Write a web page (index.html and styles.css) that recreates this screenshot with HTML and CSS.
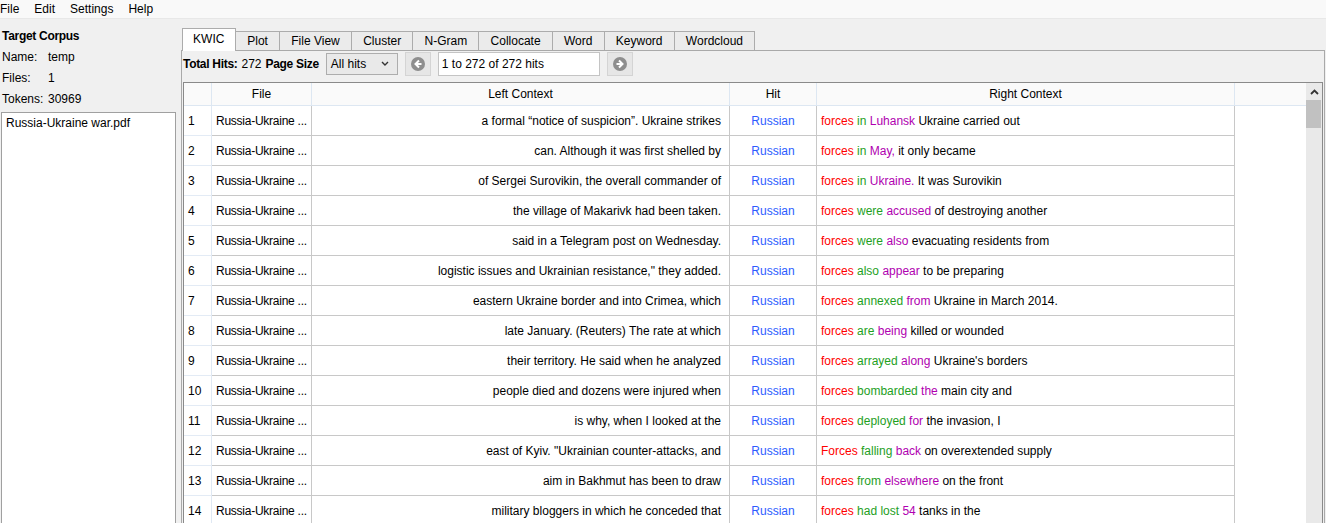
FILE: index.html
```html
<!DOCTYPE html>
<html>
<head>
<meta charset="utf-8">
<link rel="stylesheet" href="styles.css">
</head>
<body>
<div class="menubar">
  <span>File</span><span>Edit</span><span>Settings</span><span>Help</span>
</div>
<div class="main">
  <aside class="left">
    <div class="info title">Target Corpus</div>
    <div class="info"><span class="lbl">Name:</span><span>temp</span></div>
    <div class="info"><span class="lbl">Files:</span><span>1</span></div>
    <div class="info"><span class="lbl">Tokens:</span><span>30969</span></div>
    <div class="filelist"><div class="fileitem">Russia-Ukraine war.pdf</div></div>
  </aside>
  <section class="right">
    <div class="tabs">
      <div class="tab active">KWIC</div>
      <div class="tab">Plot</div>
      <div class="tab">File View</div>
      <div class="tab">Cluster</div>
      <div class="tab">N-Gram</div>
      <div class="tab">Collocate</div>
      <div class="tab">Word</div>
      <div class="tab">Keyword</div>
      <div class="tab">Wordcloud</div>
    </div>
    <div class="panel">
      <div class="toolbar">
        <b>Total Hits:</b><span class="hits">272</span><b class="ps">Page Size</b>
        <div class="select"><span>All hits</span><svg width="8" height="6" viewBox="0 0 8 6"><polyline points="1,1 4,4 7,1" fill="none" stroke="#333" stroke-width="1.4"/></svg></div>
        <div class="navbtn"><svg width="14" height="14" viewBox="0 0 14 14"><circle cx="7" cy="7" r="7" fill="#8e8e8e"/><polyline points="8,3.5 4.5,7 8,10.5" fill="none" stroke="#fff" stroke-width="2"/><line x1="5" y1="7" x2="10.5" y2="7" stroke="#fff" stroke-width="2"/></svg></div>
        <div class="field">1 to 272 of 272 hits</div>
        <div class="navbtn next"><svg width="14" height="14" viewBox="0 0 14 14"><circle cx="7" cy="7" r="7" fill="#8e8e8e"/><polyline points="6,3.5 9.5,7 6,10.5" fill="none" stroke="#fff" stroke-width="2"/><line x1="3.5" y1="7" x2="9" y2="7" stroke="#fff" stroke-width="2"/></svg></div>
      </div>
      <div class="tablewrap">
        <div class="table">
          <div class="row head">
            <div class="c num"></div><div class="c">File</div><div class="c">Left Context</div><div class="c">Hit</div><div class="c">Right Context</div><div class="c fill"></div>
          </div>
          <div class="row"><div class="c num">1</div><div class="c file">Russia-Ukraine ...</div><div class="c lc">a formal “notice of suspicion”. Ukraine strikes</div><div class="c hit">Russian</div><div class="c rc"><span><i class="r">forces</i> <i class="g">in</i> <i class="p">Luhansk</i> Ukraine carried out</span></div><div class="c fill"></div></div>
          <div class="row"><div class="c num">2</div><div class="c file">Russia-Ukraine ...</div><div class="c lc">can. Although it was first shelled by</div><div class="c hit">Russian</div><div class="c rc"><span><i class="r">forces</i> <i class="g">in</i> <i class="p">May,</i> it only became</span></div><div class="c fill"></div></div>
          <div class="row"><div class="c num">3</div><div class="c file">Russia-Ukraine ...</div><div class="c lc">of Sergei Surovikin, the overall commander of</div><div class="c hit">Russian</div><div class="c rc"><span><i class="r">forces</i> <i class="g">in</i> <i class="p">Ukraine.</i> It was Surovikin</span></div><div class="c fill"></div></div>
          <div class="row"><div class="c num">4</div><div class="c file">Russia-Ukraine ...</div><div class="c lc">the village of Makarivk had been taken.</div><div class="c hit">Russian</div><div class="c rc"><span><i class="r">forces</i> <i class="g">were</i> <i class="p">accused</i> of destroying another</span></div><div class="c fill"></div></div>
          <div class="row"><div class="c num">5</div><div class="c file">Russia-Ukraine ...</div><div class="c lc">said in a Telegram post on Wednesday.</div><div class="c hit">Russian</div><div class="c rc"><span><i class="r">forces</i> <i class="g">were</i> <i class="p">also</i> evacuating residents from</span></div><div class="c fill"></div></div>
          <div class="row"><div class="c num">6</div><div class="c file">Russia-Ukraine ...</div><div class="c lc">logistic issues and Ukrainian resistance," they added.</div><div class="c hit">Russian</div><div class="c rc"><span><i class="r">forces</i> <i class="g">also</i> <i class="p">appear</i> to be preparing</span></div><div class="c fill"></div></div>
          <div class="row"><div class="c num">7</div><div class="c file">Russia-Ukraine ...</div><div class="c lc">eastern Ukraine border and into Crimea, which</div><div class="c hit">Russian</div><div class="c rc"><span><i class="r">forces</i> <i class="g">annexed</i> <i class="p">from</i> Ukraine in March 2014.</span></div><div class="c fill"></div></div>
          <div class="row"><div class="c num">8</div><div class="c file">Russia-Ukraine ...</div><div class="c lc">late January. (Reuters) The rate at which</div><div class="c hit">Russian</div><div class="c rc"><span><i class="r">forces</i> <i class="g">are</i> <i class="p">being</i> killed or wounded</span></div><div class="c fill"></div></div>
          <div class="row"><div class="c num">9</div><div class="c file">Russia-Ukraine ...</div><div class="c lc">their territory. He said when he analyzed</div><div class="c hit">Russian</div><div class="c rc"><span><i class="r">forces</i> <i class="g">arrayed</i> <i class="p">along</i> Ukraine's borders</span></div><div class="c fill"></div></div>
          <div class="row"><div class="c num">10</div><div class="c file">Russia-Ukraine ...</div><div class="c lc">people died and dozens were injured when</div><div class="c hit">Russian</div><div class="c rc"><span><i class="r">forces</i> <i class="g">bombarded</i> <i class="p">the</i> main city and</span></div><div class="c fill"></div></div>
          <div class="row"><div class="c num">11</div><div class="c file">Russia-Ukraine ...</div><div class="c lc">is why, when I looked at the</div><div class="c hit">Russian</div><div class="c rc"><span><i class="r">forces</i> <i class="g">deployed</i> <i class="p">for</i> the invasion, I</span></div><div class="c fill"></div></div>
          <div class="row"><div class="c num">12</div><div class="c file">Russia-Ukraine ...</div><div class="c lc">east of Kyiv. "Ukrainian counter-attacks, and</div><div class="c hit">Russian</div><div class="c rc"><span><i class="r">Forces</i> <i class="g">falling</i> <i class="p">back</i> on overextended supply</span></div><div class="c fill"></div></div>
          <div class="row"><div class="c num">13</div><div class="c file">Russia-Ukraine ...</div><div class="c lc">aim in Bakhmut has been to draw</div><div class="c hit">Russian</div><div class="c rc"><span><i class="r">forces</i> <i class="g">from</i> <i class="p">elsewhere</i> on the front</span></div><div class="c fill"></div></div>
          <div class="row"><div class="c num">14</div><div class="c file">Russia-Ukraine ...</div><div class="c lc">military bloggers in which he conceded that</div><div class="c hit">Russian</div><div class="c rc"><span><i class="r">forces</i> <i class="g">had lost</i> <i class="p">54</i> tanks in the</span></div><div class="c fill"></div></div>
        </div>
        <div class="scrollbar">
          <div class="arrow"><svg width="9" height="6" viewBox="0 0 9 6"><polyline points="1,5 4.5,1.5 8,5" fill="none" stroke="#333" stroke-width="1.8"/></svg></div>
          <div class="thumb"></div>
        </div>
      </div>
    </div>
  </section>
</div>
</body>
</html>
```
FILE: styles.css
```css
* { box-sizing: border-box; }
html, body { margin: 0; padding: 0; }
body {
  width: 1326px;
  height: 523px;
  overflow: hidden;
  background: #f0f0f0;
  font-family: "Liberation Sans", Arial, sans-serif;
  font-size: 12px;
  color: #000;
}
.menubar {
  height: 19px;
  display: flex;
  align-items: center;
  gap: 15px;
  padding-left: 0;
  background: #f9f9f9;
  border-bottom: 1px solid #e8e8e8;
  font-size: 12px;
}
.main {
  display: flex;
  height: 504px;
}
.left {
  width: 181px;
  flex: none;
  padding-top: 7px;
  display: flex;
  flex-direction: column;
}
.info {
  height: 21px;
  line-height: 21px;
  padding-left: 2px;
  display: flex;
}
.info.title { font-weight: bold; letter-spacing: -0.3px; }
.lbl { width: 46px; }
.filelist {
  margin: 2px 0 0 1px;
  width: 175px;
  flex: 1;
  background: #fff;
  border: 1px solid #a0a0a0;
  border-bottom: none;
}
.fileitem {
  padding: 3px 4px;
  line-height: 14px;
}
.right {
  flex: 1;
  margin-right: 1px;
  display: flex;
  flex-direction: column;
}
.tabs {
  margin-top: 9px;
  height: 22px;
  display: flex;
  align-items: flex-end;
  padding-left: 0.5px;
  position: relative;
  z-index: 1;
}
.tab {
  height: 19px;
  line-height: 18px;
  padding: 0 11.2px;
  border: 1px solid #acacac;
  border-bottom: none;
  background: #ebebeb;
  margin-left: -1px;
}
.tab:first-child { margin-left: 0; }
.tab.active {
  height: 23px;
  line-height: 20px;
  background: #fff;
  margin-bottom: -1px;
  padding: 0 10.6px;
}
.panel {
  flex: 1;
  border: 1px solid #a9a9a9;
  border-bottom: none;
  background: #f0f0f0;
  display: flex;
  flex-direction: column;
  min-height: 0;
}
.toolbar {
  margin-top: 1px;
  height: 24px;
  display: flex;
  align-items: center;
  padding-left: 1px;
}
.toolbar b { letter-spacing: -0.3px; }
.hits { margin: 0 4px 0 4px; }
.select {
  margin-left: 7px;
  width: 72px;
  height: 22px;
  border: 1px solid #adadad;
  background: #e9e9e9;
  display: flex;
  align-items: center;
  justify-content: space-between;
  padding: 0 8px 0 4px;
}
.navbtn {
  margin-left: 7px;
  width: 26px;
  height: 24px;
  border: 1px solid #d4d4d4;
  background: #e6e6e6;
  display: flex;
  align-items: center;
  justify-content: center;
}
.navbtn.next { margin-left: 7px; }
.field {
  margin-left: 7px;
  width: 162px;
  height: 24px;
  line-height: 22px;
  background: #fff;
  border: 1px solid #c4c4c4;
  padding-left: 3px;
}
.tablewrap {
  margin: 6px 1px 0 1px;
  flex: 1;
  border: 1px solid #8a8a8a;
  border-bottom: none;
  display: flex;
  min-height: 0;
  overflow: hidden;
  background: #fff;
}
.table { flex: 1; }
.row {
  display: grid;
  grid-template-columns: 28px 100px 418px 87px 418px 1fr;
  height: 30px;
}
.c {
  border-right: 1px solid #c8c8c8;
  border-bottom: 1px solid #c8c8c8;
  white-space: nowrap;
  overflow: hidden;
  display: flex;
  align-items: center;
  padding: 0 4px;
  background: #fff;
}
.c.num {
  border-right-color: #dfe8f3;
  border-bottom-color: #e3ebf5;
}
.c.file { letter-spacing: -0.25px; }
.c.fill { border: none; }
.row.head { height: 23px; }
.row.head .c {
  background: #fafafa;
  justify-content: center;
  border-right: 1px solid #dde7f2;
  border-bottom: 1px solid #dde7f2;
}
.row.head .c.fill { border-right: none; }
.c.lc { justify-content: flex-end; padding-right: 8px; }
.c.hit { justify-content: center; color: #2d5cff; }
.c.rc { padding-left: 4px; }
.rc i { font-style: normal; }
.r { color: #ff0000; }
.g { color: #1ea01e; }
.p { color: #b000b0; }
.scrollbar {
  width: 16px;
  flex: none;
  background: #e9e9e9;
  display: flex;
  flex-direction: column;
}
.arrow {
  height: 17px;
  display: flex;
  align-items: center;
  justify-content: center;
}
.thumb {
  height: 28px;
  margin: 0 1px 0 0;
  background: #c1c1c1;
}
```
